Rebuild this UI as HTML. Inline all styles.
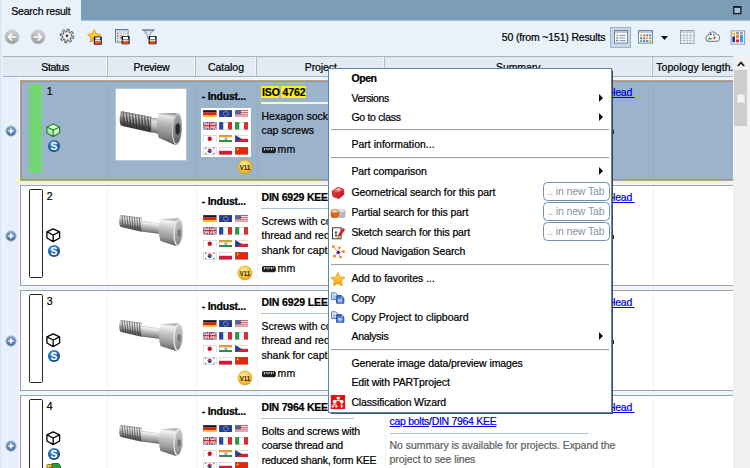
<!DOCTYPE html>
<html lang="en"><head><meta charset="utf-8"><title>Search result</title>
<style>
html,body{margin:0;padding:0;background:#fff}
body{width:750px;height:468px;overflow:hidden}
#app{position:relative;width:750px;height:468px;overflow:hidden;background:#e9f1fa;font-family:'Liberation Sans',sans-serif;font-size:10.5px;line-height:14px;color:#000}
#app div,#app span,#app a,#app svg{position:absolute;box-sizing:border-box}
.t{white-space:pre;line-height:14px;-webkit-text-stroke:0.22px currentColor}
a.t,.lnk{color:#0000e6;text-decoration:underline}
.i{overflow:visible}
.topbar{left:0;top:0;width:750px;height:21px;background:#7b9eb6;border-bottom:1px solid #a6bfd1}
.tab{left:2px;top:0;width:79px;height:22px;background:#e9f1fa}
.edge{left:0;top:0;width:2px;height:468px;background:#e4eef9;border-left:1px solid #d7e5f3}
.toolbar{left:2px;top:21px;width:748px;height:35px;background:#e9f1fa}
.tbdot{left:3px;top:54px;width:730px;height:1px;border-top:1px dotted #f7fbfe}
.vbtn{left:610px;top:27px;width:21px;height:21px;background:#c9d8e6;border:1px solid #9fb3c6}
.thead{left:3px;top:56px;width:730px;height:21px;background:#e2eaf3;border-top:1px solid #a9b3bd;border-bottom:1px solid #a9b3bd}
.th{top:0;height:19px;border-right:1px solid #b3bcc6;box-shadow:inset -1px 0 0 #f1f5fa}
.gutter{left:2px;top:77px;width:17px;height:391px;background:#e8f1fb}
.gridbg{left:19px;top:77px;width:714px;height:391px;background:#ecf4fc;border-left:1px solid #fbfdff}
.row{left:20px;width:714px;height:101px;background:#fff;border:1px solid #a2a2a2;border-left-color:#9a9a9a;border-right:0}
.row.sel{background:#9bb4cc;border:1px dotted #f08a1c;border-right:0;outline:0}
.row.sel:before{content:"";position:absolute;left:0;top:0;width:712px;bottom:0;border:1px solid #7d9cc0}
.cs{top:0;width:1px;height:99px;background:#f2f2f4}
.sel .cs{background:#92acc6}
.bar{left:8px;top:3px;width:14px;height:89px;border:1.1px solid #262626;border-radius:1.6px;background:#fff}
.sel .bar{border:0;border-radius:0;background:#72d672;width:13px;height:89px;box-shadow:0 0 0 0.6px rgba(176,160,228,.75)}
.imgbox{left:95px;top:8px;width:70px;height:71px;background:#fff;outline:1px solid #b4c8db}
.flagbox{width:50px;height:49px;background:#fff}
.fl{width:13.5px;height:7.6px;line-height:0}
.fl svg{position:static!important;display:block}
.hl{background:#ffee22}
.sepl{height:1.6px;background:#eef3f9}
.row:not(.sel) .sepl{height:1.4px;background:#abc2d9}
.vscroll{left:733px;top:56px;width:17px;height:412px;background:#f0f0f0}
.thumb{left:1px;top:14px;width:13px;height:56px;background:#cdcdcd}
.grip{left:4px;top:38px;width:8px;height:9px;background:#f3f3f3;border:1px solid #e2e2e2}
.menu{left:328px;top:68px;width:284px;height:345px;background:#fff;border:1px solid #5d86a8;box-shadow:1.4px 1.4px 0.8px rgba(30,50,70,.85)}
.msep{left:2px;width:278px;height:2px;border-top:1px solid #a2a2a2;background:#f3f3f3}
.nt{left:214px;width:67px;height:19px;border:1.2px solid #7191b0;border-radius:4.5px;background:#fff}
.nt .t{color:#8595a6;-webkit-text-stroke:0}
.arr{width:0;height:0;border-left:4.5px solid #111;border-top:4px solid transparent;border-bottom:4px solid transparent}
</style></head><body>
<div id="app">

<div class="topbar"></div><div class="edge"></div>
<div class="tab"><span class="t" style="left:9.3px;top:4px;letter-spacing:-0.213px;">Search result</span></div>
<svg class="i" style="left:733px;top:6px" width="9" height="9" viewBox="0 0 9 9" ><rect x="0.7" y="0.7" width="7.2" height="6.9" fill="#a9c1d4" stroke="#14212e" stroke-width="1.4"/><rect x="0.7" y="0.4" width="7.2" height="1.4" fill="#14212e"/></svg>
<div class="toolbar"></div><div class="tbdot"></div>
<svg class="i" style="left:4px;top:28.5px" width="16" height="16" viewBox="0 0 16 16" ><defs><linearGradient id="ng" x1="0" y1="0" x2="0" y2="1"><stop offset="0" stop-color="#d4d4d4"/><stop offset="1" stop-color="#999"/></linearGradient></defs><circle cx="8" cy="8" r="7" fill="url(#ng)" stroke="#c4c8cc" stroke-width="0.9"/><path d="M11.6 8H4.6M7.6 4.8L4.4 8L7.6 11.2" fill="none" stroke="#fff" stroke-width="1.7" stroke-linecap="round" stroke-linejoin="round"/></svg>
<svg class="i" style="left:30px;top:28.5px" width="16" height="16" viewBox="0 0 16 16" ><defs><linearGradient id="ng" x1="0" y1="0" x2="0" y2="1"><stop offset="0" stop-color="#d4d4d4"/><stop offset="1" stop-color="#999"/></linearGradient></defs><circle cx="8" cy="8" r="7" fill="url(#ng)" stroke="#c4c8cc" stroke-width="0.9"/><path d="M11.6 8H4.6M7.6 4.8L4.4 8L7.6 11.2" fill="none" stroke="#fff" stroke-width="1.7" stroke-linecap="round" stroke-linejoin="round" transform="translate(16 0) scale(-1 1)"/></svg>
<svg class="i" style="left:59.400000000000006px;top:28.4px" width="16" height="16" viewBox="0 0 16 16" ><polygon points="14.89,8.28 14.46,10.43 11.87,9.87 11.19,10.88 12.68,13.07 10.85,14.29 9.42,12.06 8.21,12.29 7.72,14.89 5.57,14.46 6.13,11.87 5.12,11.19 2.93,12.68 1.71,10.85 3.94,9.42 3.71,8.21 1.11,7.72 1.54,5.57 4.13,6.13 4.81,5.12 3.32,2.93 5.15,1.71 6.58,3.94 7.79,3.71 8.28,1.11 10.43,1.54 9.87,4.13 10.88,4.81 13.07,3.32 14.29,5.15 12.06,6.58 12.29,7.79" fill="#d6d6d6" stroke="#4e4e4e" stroke-width="0.9" stroke-linejoin="round"/><circle cx="8" cy="8" r="3.3" fill="#efefef"/><circle cx="8" cy="7.8" r="1.2" fill="#2c2c2c"/></svg>
<svg class="i" style="left:87.4px;top:29px" width="16" height="16" viewBox="0 0 16 16" ><defs><linearGradient id="sg" x1="0" y1="0" x2="0" y2="1"><stop offset="0" stop-color="#ffe04a"/><stop offset="1" stop-color="#f9b01c"/></linearGradient></defs><polygon points="7.20,0.60 9.20,4.85 13.86,5.44 10.43,8.65 11.31,13.26 7.20,11.00 3.09,13.26 3.97,8.65 0.54,5.44 5.20,4.85" fill="url(#sg)" stroke="#ee9a10" stroke-width="0.9" stroke-linejoin="round"/><g transform="translate(6.8 7.6)"><rect x="0" y="0" width="8" height="8.2" rx="0.8" fill="#0c0c18"/><rect x="1.5" y="0.8" width="5" height="2.2" fill="#fff"/><rect x="1" y="3.4" width="6" height="1.6" fill="#d8dce4"/><rect x="1" y="5" width="6" height="2.6" fill="#f26a10"/><rect x="1" y="6.6" width="6" height="1" fill="#d83a08"/></g></svg>
<svg class="i" style="left:115px;top:29.4px" width="16" height="16" viewBox="0 0 16 16" ><rect x="0.5" y="0.5" width="12.5" height="12.6" fill="#fdfdfe" stroke="#5d7f9d" stroke-width="1"/><rect x="1" y="1" width="11.5" height="1.6" fill="#b9cde0"/><path d="M4 2.6V12.6 M8.6 2.6V12.6" stroke="#9db6cc" stroke-width="0.8"/><g><rect x="1.6" y="3.6" width="1.6" height="1.4" fill="#e0483c"/><rect x="5.2" y="3.6" width="1.8" height="1.4" fill="#f2a33a"/><rect x="9.6" y="3.6" width="1.8" height="1.4" fill="#9bb3c9"/><rect x="1.6" y="6" width="1.6" height="1.4" fill="#3c7fd0"/><rect x="5.2" y="6" width="1.8" height="1.4" fill="#58b04c"/><rect x="1.6" y="8.4" width="1.6" height="1.4" fill="#58b04c"/><rect x="5.2" y="8.4" width="1.8" height="1.4" fill="#e0483c"/><rect x="1.6" y="10.8" width="1.6" height="1.2" fill="#f2a33a"/></g><g transform="translate(6.6 7)"><rect x="0" y="0" width="8" height="8.2" rx="0.8" fill="#0c0c18"/><rect x="1.5" y="0.8" width="5" height="2.2" fill="#fff"/><rect x="1" y="3.4" width="6" height="1.6" fill="#d8dce4"/><rect x="1" y="5" width="6" height="2.6" fill="#f26a10"/><rect x="1" y="6.6" width="6" height="1" fill="#d83a08"/></g></svg>
<svg class="i" style="left:142px;top:29.4px" width="16" height="16" viewBox="0 0 16 16" ><defs><linearGradient id="fg" x1="0" y1="0" x2="1" y2="0"><stop offset="0" stop-color="#8fa3b5"/><stop offset="0.5" stop-color="#dfe8f0"/><stop offset="1" stop-color="#8fa3b5"/></linearGradient></defs><path d="M0.4 0.6 H12.4 L7.6 6 V10.6 L5.2 9 V6 Z" fill="url(#fg)" stroke="#7d93a8" stroke-width="0.8" stroke-linejoin="round"/><path d="M0.6 1.2 H12.2" stroke="#6f879d" stroke-width="1.2"/><g transform="translate(6.6 7)"><rect x="0" y="0" width="8" height="8.2" rx="0.8" fill="#0c0c18"/><rect x="1.5" y="0.8" width="5" height="2.2" fill="#fff"/><rect x="1" y="3.4" width="6" height="1.6" fill="#d8dce4"/><rect x="1" y="5" width="6" height="2.6" fill="#f26a10"/><rect x="1" y="6.6" width="6" height="1" fill="#d83a08"/></g></svg>
<span class="t" style="left:501.8px;top:30px;letter-spacing:-0.163px;">50 (from ~151) Results</span>
<div class="vbtn"></div>
<svg class="i" style="left:613.5px;top:30px" width="14" height="14" viewBox="0 0 14 14" ><rect x="0.5" y="0.5" width="13" height="12.6" fill="#fbfcfd" stroke="#6f879d"/><rect x="1" y="1" width="12" height="2" fill="#b7c9da"/><g><rect x="2.2" y="4.6" width="1.8" height="1.5" fill="#e9a13a"/><rect x="2.2" y="7.2" width="1.8" height="1.5" fill="#58b04c"/><rect x="2.2" y="9.8" width="1.8" height="1.5" fill="#3c7fd0"/><path d="M5.2 5.4H11.6M5.2 8H11.6M5.2 10.6H11.6" stroke="#7a8894" stroke-width="0.9"/></g></svg>
<svg class="i" style="left:638px;top:30px" width="15" height="14" viewBox="0 0 15 14" ><rect x="0.5" y="0.5" width="14" height="12.6" fill="#fbfcfd" stroke="#6f879d"/><rect x="1" y="1" width="13" height="2" fill="#b7c9da"/><g><rect x="2.2" y="4.4" width="2" height="1.9" fill="#e9a13a"/><rect x="5.2" y="4.4" width="2" height="1.9" fill="#58b04c"/><rect x="8.2" y="4.4" width="2" height="1.9" fill="#e0483c"/><rect x="11.2" y="4.4" width="2" height="1.9" fill="#3c7fd0"/><rect x="2.2" y="7.3" width="2" height="1.9" fill="#3c7fd0"/><rect x="5.2" y="7.3" width="2" height="1.9" fill="#e0483c"/><rect x="8.2" y="7.3" width="2" height="1.9" fill="#e9a13a"/><rect x="11.2" y="7.3" width="2" height="1.9" fill="#58b04c"/><rect x="2.2" y="10.1" width="2" height="1.9" fill="#58b04c"/><rect x="5.2" y="10.1" width="2" height="1.9" fill="#3c7fd0"/><rect x="8.2" y="10.1" width="2" height="1.9" fill="#3c7fd0"/><rect x="11.2" y="10.1" width="2" height="1.9" fill="#e9a13a"/></g></svg>
<svg class="i" style="left:661px;top:36px" width="7" height="4" viewBox="0 0 7 4" ><path d="M0 0H7L3.5 4Z" fill="#111"/></svg>
<svg class="i" style="left:679.5px;top:29.5px" width="14.5" height="14.5" viewBox="0 0 15 15" ><rect x="0.5" y="0.5" width="14" height="13.4" fill="#fbfcfd" stroke="#8b9dae"/><rect x="1" y="1" width="13" height="2" fill="#c2d0dd"/><path d="M1 5.6H14M1 8.3H14M1 11H14M4.2 3V13.6M7.5 3V13.6M10.8 3V13.6" stroke="#a9b7c4" stroke-width="0.8"/></svg>
<svg class="i" style="left:705px;top:30px" width="15" height="12" viewBox="0 0 15 12" ><path d="M3.6 11.4 A3.1 3.1 0 0 1 3.1 5.4 A4.6 4.6 0 0 1 11.6 4.3 A3.6 3.6 0 0 1 11.6 11.4 Z" fill="#fefefe" stroke="#7c8b9b" stroke-width="1.1"/><path d="M5.4 5l.9-1.2" stroke="#14208a" stroke-width="1.5"/><rect x="8" y="3.9" width="1.7" height="1.6" fill="#2c9a3c"/><path d="M3.4 8.8h3.2" stroke="#2c9a3c" stroke-width="1.6"/><circle cx="4.8" cy="7.6" r="0.9" fill="#f2b01c"/><path d="M8.6 9l1.6-2.2" stroke="#e6201c" stroke-width="1.6"/></svg>
<svg class="i" style="left:730px;top:29.5px" width="15" height="15" viewBox="0 0 15 15" ><rect x="1.2" y="0.9" width="13.4" height="13.2" fill="#fdfdfe" stroke="#8a9cb0" stroke-width="1"/><rect x="2.4" y="2.6" width="2.6" height="2.6" fill="#f7c21c"/><rect x="2.4" y="6.4" width="2.6" height="5.8" fill="#142a8a"/><rect x="6" y="2.6" width="3" height="0.8" fill="#111"/><rect x="6" y="4.6" width="3" height="3.6" fill="#f58a1c"/><rect x="6" y="9.4" width="3" height="2.9" fill="#e61c1c"/><rect x="10" y="2.6" width="2.8" height="0.8" fill="#111"/><rect x="10" y="4.6" width="2.8" height="7.7" fill="#2a9cf2"/></svg>
<div class="thead">
<div class="th" style="left:0;width:104.5px"></div>
<div class="th" style="left:0;width:193.0px"></div>
<div class="th" style="left:0;width:254.0px"></div>
<div class="th" style="left:0;width:382.0px"></div>
<div class="th" style="left:0;width:650.0px"></div>
<span class="t" style="left:38.3px;top:3px;letter-spacing:-0.347px;">Status</span>
<span class="t" style="left:130.6px;top:3px;letter-spacing:-0.223px;">Preview</span>
<span class="t" style="left:205.0px;top:3px;letter-spacing:-0.029px;">Catalog</span>
<span class="t" style="left:301.8px;top:3px;letter-spacing:-0.098px;">Project</span>
<span class="t" style="left:493.0px;top:3px;letter-spacing:-0.077px;">Summary</span>
<span class="t" style="left:653.3px;top:3px;letter-spacing:0.045px;">Topology length.</span>
</div>
<div class="gutter"></div><div class="gridbg"></div>
<div class="row sel" style="top:80px;height:101px">
<div class="cs" style="left:86.0px;height:99px"></div>
<div class="cs" style="left:174.5px;height:99px"></div>
<div class="cs" style="left:235.5px;height:99px"></div>
<div class="cs" style="left:363.5px;height:99px"></div>
<div class="cs" style="left:631.5px;height:99px"></div>
<div class="bar"></div>
<span class="t" style="left:25.8px;top:3px;">1</span>
<svg class="i" style="left:25.200000000000003px;top:42px" width="15" height="15" viewBox="0 0 15 15" ><path d="M7.2 0.9 L13.6 3.9 L13.6 10 L7.2 13.6 L0.9 10 L0.9 3.9 Z" fill="#e4f7de"/><path d="M0.9 3.9 L7.2 7 L7.2 13.6 L0.9 10 Z" fill="#b9e6b0"/><path d="M13.6 3.9 L7.2 7 L7.2 13.6 L13.6 10 Z" fill="#d0f0c8"/><path d="M7.2 0.9 L13.6 3.9 L13.6 10 L7.2 13.6 L0.9 10 L0.9 3.9 Z M0.9 3.9 L7.2 7 L13.6 3.9 M7.2 7 V13.6" fill="none" stroke="#128a1c" stroke-width="1.15" stroke-linejoin="round"/></svg>
<svg class="i" style="left:25.6px;top:57.69999999999999px" width="14" height="14" viewBox="0 0 14 14" ><defs><radialGradient id="sb" cx="0.4" cy="0.3" r="0.8"><stop offset="0" stop-color="#4d9ad6"/><stop offset="0.6" stop-color="#1d62a6"/><stop offset="1" stop-color="#0d3c74"/></radialGradient></defs><circle cx="7" cy="7" r="6.1" fill="url(#sb)"/><text x="7" y="10.7" text-anchor="middle" font-family="Liberation Sans, sans-serif" font-weight="700" font-size="10.4" fill="#fff">S</text></svg>
<div class="imgbox"></div>
<svg class="i" style="filter:blur(0.35px);left:95px;top:7.5px" width="70" height="71" viewBox="116 88.5 70 71" ><defs>
<linearGradient id="th1" gradientUnits="userSpaceOnUse" x1="134" y1="113" x2="131.5" y2="129"><stop offset="0" stop-color="#6c6c6c"/><stop offset="0.14" stop-color="#b8b8b8"/><stop offset="0.36" stop-color="#7a7a7a"/><stop offset="0.75" stop-color="#444"/><stop offset="1" stop-color="#343434"/></linearGradient>
<linearGradient id="nk1" gradientUnits="userSpaceOnUse" x1="155" y1="117" x2="153" y2="132"><stop offset="0" stop-color="#9a9a9a"/><stop offset="0.25" stop-color="#e2e2e2"/><stop offset="0.7" stop-color="#a8a8a8"/><stop offset="1" stop-color="#6a6a6a"/></linearGradient>
<linearGradient id="hd1" gradientUnits="userSpaceOnUse" x1="167" y1="112" x2="163" y2="142"><stop offset="0" stop-color="#8a8a8a"/><stop offset="0.12" stop-color="#e8e8e8"/><stop offset="0.3" stop-color="#c4c4c4"/><stop offset="0.6" stop-color="#9a9a9a"/><stop offset="0.85" stop-color="#7a7a7a"/><stop offset="1" stop-color="#555"/></linearGradient>
<linearGradient id="fc1" gradientUnits="userSpaceOnUse" x1="172" y1="114" x2="180" y2="144"><stop offset="0" stop-color="#a6a6a6"/><stop offset="0.5" stop-color="#868686"/><stop offset="1" stop-color="#5e5e5e"/></linearGradient>
</defs>
<path d="M121.6 110.7 L151.6 116.5 L151.6 132 L121.6 125.3 Q119.6 124.6 119.7 118 Q119.8 111 121.6 110.7Z" fill="url(#th1)"/>
<path d="M123.20 111.00 L124.80 126.29 M126.25 111.58 L127.85 126.94 M129.30 112.15 L130.90 127.60 M132.35 112.72 L133.95 128.26 M135.40 113.30 L137.00 128.91 M138.45 113.87 L140.05 129.57 M141.50 114.44 L143.10 130.22 M144.55 115.02 L146.15 130.88 M147.60 115.59 L149.20 131.53 M150.65 116.16 L152.25 132.19 " stroke="#2a2a2a" stroke-width="1.3" opacity="0.55" fill="none"/><path d="M124.70 111.48 L125.70 120.94 M127.75 112.06 L128.75 121.55 M130.80 112.63 L131.80 122.16 M133.85 113.20 L134.85 122.77 M136.90 113.78 L137.90 123.38 M139.95 114.35 L140.95 123.99 M143.00 114.92 L144.00 124.60 M146.05 115.50 L147.05 125.21 M149.10 116.07 L150.10 125.82 M152.15 116.64 L153.15 126.43 " stroke="#f0f0f0" stroke-width="1" opacity="0.4" fill="none"/>
<path d="M121.8 111.4 L151.4 117.2" stroke="#9a9a9a" stroke-width="0.8" opacity="0.7"/>
<path d="M151.2 117.2 L158 118 L158 133.2 L151.2 131.6Z" fill="url(#nk1)"/>
<path d="M158.2 114.6 Q158.6 112.9 160.2 112.8 L176.6 112.5 L180 120 L181 135 L175.6 144.8 L158.6 137.2 Q155.2 126 158.2 114.6Z" fill="url(#hd1)"/>
<ellipse cx="177" cy="128.6" rx="5.1" ry="16.1" transform="rotate(3 177 128.6)" fill="#c8c8c8"/><ellipse cx="177.4" cy="128.7" rx="4.2" ry="14.4" transform="rotate(3 177.4 128.7)" fill="url(#fc1)"/>
<path d="M177.8 122.3 L179.9 124.6 L180 131.6 L177.8 134.8 L175.6 132.4 L175.5 125.2Z" fill="#262626" stroke="#555" stroke-width="0.5"/></svg>
<span class="t" style="left:180.7px;top:8px;letter-spacing:-0.216px;font-weight:700;">- Indust...</span>
<div class="flagbox" style="left:179.5px;top:26.6px"></div><span class="fl" style="left:182px;top:28.8px"><svg width="13.5" height="7.6" viewBox="0 0 13.5 7.6" preserveAspectRatio="none"><rect x="0" y="0" width="13.5" height="2.6" fill="#1a1a1a"/><rect x="0" y="2.5" width="13.5" height="2.6" fill="#e31b1b"/><rect x="0" y="5" width="13.5" height="2.6" fill="#f7c81e"/><rect x="0.25" y="0.25" width="13.0" height="7.1" fill="none" stroke="#8a8a8a" stroke-opacity="0.55" stroke-width="0.5"/></svg></span><span class="fl" style="left:197.8px;top:28.8px"><svg width="13.5" height="7.6" viewBox="0 0 13.5 7.6" preserveAspectRatio="none"><rect x="0" y="0" width="13.5" height="7.6" fill="#1f3a9e"/><circle cx="6.75" cy="3.8" r="2.3" fill="none" stroke="#f2d64a" stroke-width="0.9" stroke-dasharray="0.9 0.55"/><rect x="0.25" y="0.25" width="13.0" height="7.1" fill="none" stroke="#8a8a8a" stroke-opacity="0.55" stroke-width="0.5"/></svg></span><span class="fl" style="left:213.5px;top:28.8px"><svg width="13.5" height="7.6" viewBox="0 0 13.5 7.6" preserveAspectRatio="none"><rect x="0" y="0" width="13.5" height="7.6" fill="#f4f0f0"/><rect x="0" y="0.0" width="13.5" height="1.0857142857142856" fill="#d4505c"/><rect x="0" y="2.1714285714285713" width="13.5" height="1.0857142857142856" fill="#d4505c"/><rect x="0" y="4.3428571428571425" width="13.5" height="1.0857142857142856" fill="#d4505c"/><rect x="0" y="6.514285714285713" width="13.5" height="1.0857142857142856" fill="#d4505c"/><rect x="0" y="0" width="6" height="4.2" fill="#5a5f9a"/><rect x="0.25" y="0.25" width="13.0" height="7.1" fill="none" stroke="#8a8a8a" stroke-opacity="0.55" stroke-width="0.5"/></svg></span><span class="fl" style="left:182px;top:41.2px"><svg width="13.5" height="7.6" viewBox="0 0 13.5 7.6" preserveAspectRatio="none"><rect x="0" y="0" width="13.5" height="7.6" fill="#2a3a94"/><path d="M0 0L13.5 7.6M13.5 0L0 7.6" stroke="#fff" stroke-width="1.8"/><path d="M0 0L13.5 7.6M13.5 0L0 7.6" stroke="#d62a36" stroke-width="0.7"/><path d="M6.75 0V7.6M0 3.8H13.5" stroke="#fff" stroke-width="2.8"/><path d="M6.75 0V7.6M0 3.8H13.5" stroke="#d62a36" stroke-width="1.5"/><rect x="0.25" y="0.25" width="13.0" height="7.1" fill="none" stroke="#8a8a8a" stroke-opacity="0.55" stroke-width="0.5"/></svg></span><span class="fl" style="left:197.8px;top:41.2px"><svg width="13.5" height="7.6" viewBox="0 0 13.5 7.6" preserveAspectRatio="none"><rect x="0" y="0" width="4.5" height="7.6" fill="#2545a8"/><rect x="4.5" y="0" width="4.5" height="7.6" fill="#fff"/><rect x="9" y="0" width="4.5" height="7.6" fill="#e2252b"/><rect x="0.25" y="0.25" width="13.0" height="7.1" fill="none" stroke="#8a8a8a" stroke-opacity="0.55" stroke-width="0.5"/></svg></span><span class="fl" style="left:213.5px;top:41.2px"><svg width="13.5" height="7.6" viewBox="0 0 13.5 7.6" preserveAspectRatio="none"><rect x="0" y="0" width="4.5" height="7.6" fill="#2f9a46"/><rect x="4.5" y="0" width="4.5" height="7.6" fill="#fff"/><rect x="9" y="0" width="4.5" height="7.6" fill="#dd2b32"/><rect x="0.25" y="0.25" width="13.0" height="7.1" fill="none" stroke="#8a8a8a" stroke-opacity="0.55" stroke-width="0.5"/></svg></span><span class="fl" style="left:182px;top:53.6px"><svg width="13.5" height="7.6" viewBox="0 0 13.5 7.6" preserveAspectRatio="none"><rect x="0" y="0" width="13.5" height="7.6" fill="#fff"/><circle cx="6.75" cy="3.8" r="2.2" fill="#c81428"/><rect x="0.25" y="0.25" width="13.0" height="7.1" fill="none" stroke="#8a8a8a" stroke-opacity="0.55" stroke-width="0.5"/></svg></span><span class="fl" style="left:197.8px;top:53.6px"><svg width="13.5" height="7.6" viewBox="0 0 13.5 7.6" preserveAspectRatio="none"><rect x="0" y="0" width="13.5" height="2.6" fill="#f39a32"/><rect x="0" y="2.5" width="13.5" height="2.6" fill="#fff"/><rect x="0" y="5" width="13.5" height="2.6" fill="#2f8f3a"/><circle cx="6.75" cy="3.8" r="1" fill="none" stroke="#2a3a94" stroke-width="0.6"/><rect x="0.25" y="0.25" width="13.0" height="7.1" fill="none" stroke="#8a8a8a" stroke-opacity="0.55" stroke-width="0.5"/></svg></span><span class="fl" style="left:213.5px;top:53.6px"><svg width="13.5" height="7.6" viewBox="0 0 13.5 7.6" preserveAspectRatio="none"><rect x="0" y="0" width="13.5" height="3.8" fill="#fff"/><rect x="0" y="3.8" width="13.5" height="3.8" fill="#d7222d"/><path d="M0 0L6.6 3.8L0 7.6Z" fill="#24408e"/><rect x="0.25" y="0.25" width="13.0" height="7.1" fill="none" stroke="#8a8a8a" stroke-opacity="0.55" stroke-width="0.5"/></svg></span><span class="fl" style="left:182px;top:66px"><svg width="13.5" height="7.6" viewBox="0 0 13.5 7.6" preserveAspectRatio="none"><rect x="0" y="0" width="13.5" height="7.6" fill="#fff"/><path d="M4.6 3.8A2.15 2.15 0 0 1 8.9 3.8Z" fill="#cd2e3a" transform="rotate(25 6.75 3.8)"/><path d="M4.6 3.8A2.15 2.15 0 0 0 8.9 3.8Z" fill="#0047a0" transform="rotate(25 6.75 3.8)"/><path d="M2 1.6L3.4 0.8M2 6L3.4 6.8M10.1 0.8L11.5 1.6M10.1 6.8L11.5 6" stroke="#222" stroke-width="0.8"/><rect x="0.25" y="0.25" width="13.0" height="7.1" fill="none" stroke="#8a8a8a" stroke-opacity="0.55" stroke-width="0.5"/></svg></span><span class="fl" style="left:197.8px;top:66px"><svg width="13.5" height="7.6" viewBox="0 0 13.5 7.6" preserveAspectRatio="none"><rect x="0" y="0" width="13.5" height="3.8" fill="#fff"/><rect x="0" y="3.8" width="13.5" height="3.8" fill="#dc143c"/><rect x="0.25" y="0.25" width="13.0" height="7.1" fill="none" stroke="#8a8a8a" stroke-opacity="0.55" stroke-width="0.5"/></svg></span><span class="fl" style="left:213.5px;top:66px"><svg width="13.5" height="7.6" viewBox="0 0 13.5 7.6" preserveAspectRatio="none"><rect x="0" y="0" width="13.5" height="7.6" fill="#de2910"/><polygon points="2.60,0.90 2.98,1.87 4.03,1.94 3.22,2.60 3.48,3.61 2.60,3.05 1.72,3.61 1.98,2.60 1.17,1.94 2.22,1.87" fill="#ffde00"/><rect x="0.25" y="0.25" width="13.0" height="7.1" fill="none" stroke="#8a8a8a" stroke-opacity="0.55" stroke-width="0.5"/></svg></span>
<svg class="i" style="left:216.2px;top:78.4px" width="16" height="16" viewBox="0 0 16 16" ><defs><radialGradient id="vg" cx="0.45" cy="0.35" r="0.75"><stop offset="0" stop-color="#fff3b0"/><stop offset="0.55" stop-color="#f6c638"/><stop offset="1" stop-color="#d98e0c"/></radialGradient></defs><circle cx="8" cy="8" r="7" fill="url(#vg)" stroke="#e0a21c" stroke-width="0.7"/><text x="8" y="10.6" text-anchor="middle" font-family="Liberation Sans, sans-serif" font-weight="700" font-size="7" fill="#2a1a00" textLength="10.5" lengthAdjust="spacingAndGlyphs">V11</text></svg>
<div class="hl" style="left:240px;top:4.6px;width:18.3px;height:12.9px"></div><div class="hl" style="left:260.2px;top:4.6px;width:25.2px;height:12.9px"></div>
<span class="t" style="left:241.0px;top:4px;letter-spacing:-0.097px;font-weight:700;">ISO 4762</span>
<div class="sepl" style="left:240px;top:21.2px;width:95px"></div>
<span class="t" style="left:240.5px;top:28px;">Hexagon socket head</span>
<span class="t" style="left:240.5px;top:42px;">cap screws</span>
<svg class="i" style="left:241.0px;top:66.19999999999999px" width="14" height="6.2" viewBox="0 0 14 6.2" ><rect x="0.5" y="0.5" width="12.8" height="5.2" rx="0.9" fill="#1c1c1c" stroke="#111" stroke-width="0.9"/><path d="M2.4 1V3.4M4.2 1V2.6M6 1V3.4M7.8 1V2.6M9.6 1V3.4M11.4 1V2.6" stroke="#f4f4f4" stroke-width="0.9"/></svg>
<span class="t" style="left:256.5px;top:61px;letter-spacing:0.300px;">mm</span>
<a class="t lnk" style="right:99.4px;top:4px;letter-spacing:-0.28px">Bolts/Screws/Cap screws/Socket Head </a>
<span class="t" style="left:368.6px;top:17px;letter-spacing:-0.28px;"><span class="lnk" style="position:static">cap screws</span>/<span class="lnk" style="position:static">ISO 4762</span></span>
<div class="sepl" style="left:368.6px;top:36.5px;width:198px"></div><div style="left:591.6px;top:48.5px;width:1.8px;height:4.5px;background:#2a2a2a"></div>
</div>
<div class="row" style="top:185px;height:101px">
<div class="cs" style="left:86.0px;height:99px"></div>
<div class="cs" style="left:174.5px;height:99px"></div>
<div class="cs" style="left:235.5px;height:99px"></div>
<div class="cs" style="left:363.5px;height:99px"></div>
<div class="cs" style="left:631.5px;height:99px"></div>
<div class="bar"></div>
<span class="t" style="left:25.8px;top:3px;">2</span>
<svg class="i" style="left:25.200000000000003px;top:42px" width="15" height="15" viewBox="0 0 15 15" ><path d="M7.2 0.9 L13.6 3.9 L13.6 10 L7.2 13.6 L0.9 10 L0.9 3.9 Z" fill="#fff"/><path d="M0.9 3.9 L7.2 7 L7.2 13.6 L0.9 10 Z" fill="#fff"/><path d="M13.6 3.9 L7.2 7 L7.2 13.6 L13.6 10 Z" fill="#fff"/><path d="M7.2 0.9 L13.6 3.9 L13.6 10 L7.2 13.6 L0.9 10 L0.9 3.9 Z M0.9 3.9 L7.2 7 L13.6 3.9 M7.2 7 V13.6" fill="none" stroke="#000" stroke-width="1.3" stroke-linejoin="round"/></svg>
<svg class="i" style="left:25.6px;top:57.69999999999999px" width="14" height="14" viewBox="0 0 14 14" ><defs><radialGradient id="sb" cx="0.4" cy="0.3" r="0.8"><stop offset="0" stop-color="#4d9ad6"/><stop offset="0.6" stop-color="#1d62a6"/><stop offset="1" stop-color="#0d3c74"/></radialGradient></defs><circle cx="7" cy="7" r="6.1" fill="url(#sb)"/><text x="7" y="10.7" text-anchor="middle" font-family="Liberation Sans, sans-serif" font-weight="700" font-size="10.4" fill="#fff">S</text></svg>
<svg class="i" style="filter:blur(0.35px);left:93.5px;top:16px" width="72" height="60" viewBox="114.5 202 72 60" ><defs>
<linearGradient id="th2" gradientUnits="userSpaceOnUse" x1="131" y1="216" x2="129" y2="230"><stop offset="0" stop-color="#8a8a8a"/><stop offset="0.18" stop-color="#dcdcdc"/><stop offset="0.45" stop-color="#a0a0a0"/><stop offset="0.8" stop-color="#626262"/><stop offset="1" stop-color="#4c4c4c"/></linearGradient>
<linearGradient id="sh2" gradientUnits="userSpaceOnUse" x1="152" y1="221" x2="150.5" y2="233"><stop offset="0" stop-color="#8c8c8c"/><stop offset="0.2" stop-color="#f2f2f2"/><stop offset="0.55" stop-color="#b8b8b8"/><stop offset="0.85" stop-color="#8a8a8a"/><stop offset="1" stop-color="#5c5c5c"/></linearGradient>
<linearGradient id="hd2" gradientUnits="userSpaceOnUse" x1="169" y1="218" x2="165.5" y2="244"><stop offset="0" stop-color="#9a9a9a"/><stop offset="0.13" stop-color="#f4f4f4"/><stop offset="0.4" stop-color="#c6c6c6"/><stop offset="0.75" stop-color="#989898"/><stop offset="1" stop-color="#626262"/></linearGradient>
<linearGradient id="fc2" gradientUnits="userSpaceOnUse" x1="174" y1="220" x2="181" y2="246"><stop offset="0" stop-color="#cccccc"/><stop offset="0.55" stop-color="#a8a8a8"/><stop offset="1" stop-color="#7a7a7a"/></linearGradient>
</defs>
<path d="M120.6 215 L141.3 217.7 L141.3 231.8 L120.6 227 Q118.6 226.4 118.7 221 Q118.8 215.4 120.6 215Z" fill="url(#th2)"/>
<path d="M121.60 215.51 L122.90 227.73 M124.05 215.81 L125.35 228.24 M126.50 216.10 L127.80 228.74 M128.95 216.39 L130.25 229.24 M131.40 216.69 L132.70 229.74 M133.85 216.98 L135.15 230.24 M136.30 217.28 L137.60 230.75 M138.75 217.57 L140.05 231.25 " stroke="#3a3a3a" stroke-width="1" opacity="0.55" fill="none"/><path d="M122.80 215.86 L123.60 223.61 M125.25 216.15 L126.05 224.00 M127.70 216.44 L128.50 224.39 M130.15 216.74 L130.95 224.78 M132.60 217.03 L133.40 225.18 M135.05 217.33 L135.85 225.57 M137.50 217.62 L138.30 225.96 M139.95 217.91 L140.75 226.35 " stroke="#fff" stroke-width="0.9" opacity="0.45" fill="none"/>
<path d="M140.8 220.8 L160 223.6 L160 234 L140.8 231.4Z" fill="url(#sh2)"/>
<path d="M159.6 220.4 Q160 219.1 161.4 219 L178 218.3 L181.4 225 L182 237 L176.2 246.2 L160 240.9 Q156.8 231 159.6 220.4Z" fill="url(#hd2)"/>
<ellipse cx="177.7" cy="232.2" rx="4.7" ry="13.9" transform="rotate(4 177.7 232.2)" fill="#e6e6e6"/><ellipse cx="178.1" cy="232.3" rx="3.8" ry="12.4" transform="rotate(4 178.1 232.3)" fill="url(#fc2)"/>
<path d="M178.6 228.8 L180.2 230.5 L180.2 235 L178.6 237.2 L177 235.5 L176.9 230.7Z" fill="#747474" stroke="#9a9a9a" stroke-width="0.4"/></svg>
<span class="t" style="left:180.7px;top:8px;letter-spacing:-0.216px;font-weight:700;">- Indust...</span>
<span class="fl" style="left:182px;top:28.8px"><svg width="13.5" height="7.6" viewBox="0 0 13.5 7.6" preserveAspectRatio="none"><rect x="0" y="0" width="13.5" height="2.6" fill="#1a1a1a"/><rect x="0" y="2.5" width="13.5" height="2.6" fill="#e31b1b"/><rect x="0" y="5" width="13.5" height="2.6" fill="#f7c81e"/><rect x="0.25" y="0.25" width="13.0" height="7.1" fill="none" stroke="#8a8a8a" stroke-opacity="0.55" stroke-width="0.5"/></svg></span><span class="fl" style="left:197.8px;top:28.8px"><svg width="13.5" height="7.6" viewBox="0 0 13.5 7.6" preserveAspectRatio="none"><rect x="0" y="0" width="13.5" height="7.6" fill="#1f3a9e"/><circle cx="6.75" cy="3.8" r="2.3" fill="none" stroke="#f2d64a" stroke-width="0.9" stroke-dasharray="0.9 0.55"/><rect x="0.25" y="0.25" width="13.0" height="7.1" fill="none" stroke="#8a8a8a" stroke-opacity="0.55" stroke-width="0.5"/></svg></span><span class="fl" style="left:213.5px;top:28.8px"><svg width="13.5" height="7.6" viewBox="0 0 13.5 7.6" preserveAspectRatio="none"><rect x="0" y="0" width="13.5" height="7.6" fill="#f4f0f0"/><rect x="0" y="0.0" width="13.5" height="1.0857142857142856" fill="#d4505c"/><rect x="0" y="2.1714285714285713" width="13.5" height="1.0857142857142856" fill="#d4505c"/><rect x="0" y="4.3428571428571425" width="13.5" height="1.0857142857142856" fill="#d4505c"/><rect x="0" y="6.514285714285713" width="13.5" height="1.0857142857142856" fill="#d4505c"/><rect x="0" y="0" width="6" height="4.2" fill="#5a5f9a"/><rect x="0.25" y="0.25" width="13.0" height="7.1" fill="none" stroke="#8a8a8a" stroke-opacity="0.55" stroke-width="0.5"/></svg></span><span class="fl" style="left:182px;top:41.2px"><svg width="13.5" height="7.6" viewBox="0 0 13.5 7.6" preserveAspectRatio="none"><rect x="0" y="0" width="13.5" height="7.6" fill="#2a3a94"/><path d="M0 0L13.5 7.6M13.5 0L0 7.6" stroke="#fff" stroke-width="1.8"/><path d="M0 0L13.5 7.6M13.5 0L0 7.6" stroke="#d62a36" stroke-width="0.7"/><path d="M6.75 0V7.6M0 3.8H13.5" stroke="#fff" stroke-width="2.8"/><path d="M6.75 0V7.6M0 3.8H13.5" stroke="#d62a36" stroke-width="1.5"/><rect x="0.25" y="0.25" width="13.0" height="7.1" fill="none" stroke="#8a8a8a" stroke-opacity="0.55" stroke-width="0.5"/></svg></span><span class="fl" style="left:197.8px;top:41.2px"><svg width="13.5" height="7.6" viewBox="0 0 13.5 7.6" preserveAspectRatio="none"><rect x="0" y="0" width="4.5" height="7.6" fill="#2545a8"/><rect x="4.5" y="0" width="4.5" height="7.6" fill="#fff"/><rect x="9" y="0" width="4.5" height="7.6" fill="#e2252b"/><rect x="0.25" y="0.25" width="13.0" height="7.1" fill="none" stroke="#8a8a8a" stroke-opacity="0.55" stroke-width="0.5"/></svg></span><span class="fl" style="left:213.5px;top:41.2px"><svg width="13.5" height="7.6" viewBox="0 0 13.5 7.6" preserveAspectRatio="none"><rect x="0" y="0" width="4.5" height="7.6" fill="#2f9a46"/><rect x="4.5" y="0" width="4.5" height="7.6" fill="#fff"/><rect x="9" y="0" width="4.5" height="7.6" fill="#dd2b32"/><rect x="0.25" y="0.25" width="13.0" height="7.1" fill="none" stroke="#8a8a8a" stroke-opacity="0.55" stroke-width="0.5"/></svg></span><span class="fl" style="left:182px;top:53.6px"><svg width="13.5" height="7.6" viewBox="0 0 13.5 7.6" preserveAspectRatio="none"><rect x="0" y="0" width="13.5" height="7.6" fill="#fff"/><circle cx="6.75" cy="3.8" r="2.2" fill="#c81428"/><rect x="0.25" y="0.25" width="13.0" height="7.1" fill="none" stroke="#8a8a8a" stroke-opacity="0.55" stroke-width="0.5"/></svg></span><span class="fl" style="left:197.8px;top:53.6px"><svg width="13.5" height="7.6" viewBox="0 0 13.5 7.6" preserveAspectRatio="none"><rect x="0" y="0" width="13.5" height="2.6" fill="#f39a32"/><rect x="0" y="2.5" width="13.5" height="2.6" fill="#fff"/><rect x="0" y="5" width="13.5" height="2.6" fill="#2f8f3a"/><circle cx="6.75" cy="3.8" r="1" fill="none" stroke="#2a3a94" stroke-width="0.6"/><rect x="0.25" y="0.25" width="13.0" height="7.1" fill="none" stroke="#8a8a8a" stroke-opacity="0.55" stroke-width="0.5"/></svg></span><span class="fl" style="left:213.5px;top:53.6px"><svg width="13.5" height="7.6" viewBox="0 0 13.5 7.6" preserveAspectRatio="none"><rect x="0" y="0" width="13.5" height="3.8" fill="#fff"/><rect x="0" y="3.8" width="13.5" height="3.8" fill="#d7222d"/><path d="M0 0L6.6 3.8L0 7.6Z" fill="#24408e"/><rect x="0.25" y="0.25" width="13.0" height="7.1" fill="none" stroke="#8a8a8a" stroke-opacity="0.55" stroke-width="0.5"/></svg></span><span class="fl" style="left:182px;top:66px"><svg width="13.5" height="7.6" viewBox="0 0 13.5 7.6" preserveAspectRatio="none"><rect x="0" y="0" width="13.5" height="7.6" fill="#fff"/><path d="M4.6 3.8A2.15 2.15 0 0 1 8.9 3.8Z" fill="#cd2e3a" transform="rotate(25 6.75 3.8)"/><path d="M4.6 3.8A2.15 2.15 0 0 0 8.9 3.8Z" fill="#0047a0" transform="rotate(25 6.75 3.8)"/><path d="M2 1.6L3.4 0.8M2 6L3.4 6.8M10.1 0.8L11.5 1.6M10.1 6.8L11.5 6" stroke="#222" stroke-width="0.8"/><rect x="0.25" y="0.25" width="13.0" height="7.1" fill="none" stroke="#8a8a8a" stroke-opacity="0.55" stroke-width="0.5"/></svg></span><span class="fl" style="left:197.8px;top:66px"><svg width="13.5" height="7.6" viewBox="0 0 13.5 7.6" preserveAspectRatio="none"><rect x="0" y="0" width="13.5" height="3.8" fill="#fff"/><rect x="0" y="3.8" width="13.5" height="3.8" fill="#dc143c"/><rect x="0.25" y="0.25" width="13.0" height="7.1" fill="none" stroke="#8a8a8a" stroke-opacity="0.55" stroke-width="0.5"/></svg></span><span class="fl" style="left:213.5px;top:66px"><svg width="13.5" height="7.6" viewBox="0 0 13.5 7.6" preserveAspectRatio="none"><rect x="0" y="0" width="13.5" height="7.6" fill="#de2910"/><polygon points="2.60,0.90 2.98,1.87 4.03,1.94 3.22,2.60 3.48,3.61 2.60,3.05 1.72,3.61 1.98,2.60 1.17,1.94 2.22,1.87" fill="#ffde00"/><rect x="0.25" y="0.25" width="13.0" height="7.1" fill="none" stroke="#8a8a8a" stroke-opacity="0.55" stroke-width="0.5"/></svg></span>
<svg class="i" style="left:216.2px;top:79px" width="16" height="16" viewBox="0 0 16 16" ><defs><radialGradient id="vg" cx="0.45" cy="0.35" r="0.75"><stop offset="0" stop-color="#fff3b0"/><stop offset="0.55" stop-color="#f6c638"/><stop offset="1" stop-color="#d98e0c"/></radialGradient></defs><circle cx="8" cy="8" r="7" fill="url(#vg)" stroke="#e0a21c" stroke-width="0.7"/><text x="8" y="10.6" text-anchor="middle" font-family="Liberation Sans, sans-serif" font-weight="700" font-size="7" fill="#2a1a00" textLength="10.5" lengthAdjust="spacingAndGlyphs">V11</text></svg>
<span class="t" style="left:240.5px;top:4px;letter-spacing:-0.206px;font-weight:700;">DIN 6929 KEE</span>
<div class="sepl" style="left:240px;top:22.0px;width:93px"></div>
<span class="t" style="left:240.5px;top:28px;">Screws with coarse</span>
<span class="t" style="left:240.5px;top:42px;">thread and reduced</span>
<span class="t" style="left:240.5px;top:57px;">shank for captive</span>
<svg class="i" style="left:241.0px;top:80.30000000000001px" width="14" height="6.2" viewBox="0 0 14 6.2" ><rect x="0.5" y="0.5" width="12.8" height="5.2" rx="0.9" fill="#1c1c1c" stroke="#111" stroke-width="0.9"/><path d="M2.4 1V3.4M4.2 1V2.6M6 1V3.4M7.8 1V2.6M9.6 1V3.4M11.4 1V2.6" stroke="#f4f4f4" stroke-width="0.9"/></svg>
<span class="t" style="left:256.5px;top:75px;letter-spacing:0.300px;">mm</span>
<a class="t lnk" style="right:99.4px;top:4px;letter-spacing:-0.28px">Bolts/Screws/Cap screws/Socket Head </a>
<span class="t" style="left:368.6px;top:17px;letter-spacing:-0.28px;"><span class="lnk" style="position:static">cap bolts</span>/<span class="lnk" style="position:static">DIN 6929 KEE</span></span>
<div class="sepl" style="left:368.6px;top:36.5px;width:198px"></div><div style="left:591.6px;top:48.5px;width:1.8px;height:4.5px;background:#2a2a2a"></div>
</div>
<div class="row" style="top:290px;height:101px">
<div class="cs" style="left:86.0px;height:99px"></div>
<div class="cs" style="left:174.5px;height:99px"></div>
<div class="cs" style="left:235.5px;height:99px"></div>
<div class="cs" style="left:363.5px;height:99px"></div>
<div class="cs" style="left:631.5px;height:99px"></div>
<div class="bar"></div>
<span class="t" style="left:25.8px;top:3px;">3</span>
<svg class="i" style="left:25.200000000000003px;top:42px" width="15" height="15" viewBox="0 0 15 15" ><path d="M7.2 0.9 L13.6 3.9 L13.6 10 L7.2 13.6 L0.9 10 L0.9 3.9 Z" fill="#fff"/><path d="M0.9 3.9 L7.2 7 L7.2 13.6 L0.9 10 Z" fill="#fff"/><path d="M13.6 3.9 L7.2 7 L7.2 13.6 L13.6 10 Z" fill="#fff"/><path d="M7.2 0.9 L13.6 3.9 L13.6 10 L7.2 13.6 L0.9 10 L0.9 3.9 Z M0.9 3.9 L7.2 7 L13.6 3.9 M7.2 7 V13.6" fill="none" stroke="#000" stroke-width="1.3" stroke-linejoin="round"/></svg>
<svg class="i" style="left:25.6px;top:57.69999999999999px" width="14" height="14" viewBox="0 0 14 14" ><defs><radialGradient id="sb" cx="0.4" cy="0.3" r="0.8"><stop offset="0" stop-color="#4d9ad6"/><stop offset="0.6" stop-color="#1d62a6"/><stop offset="1" stop-color="#0d3c74"/></radialGradient></defs><circle cx="7" cy="7" r="6.1" fill="url(#sb)"/><text x="7" y="10.7" text-anchor="middle" font-family="Liberation Sans, sans-serif" font-weight="700" font-size="10.4" fill="#fff">S</text></svg>
<svg class="i" style="filter:blur(0.35px);left:93.5px;top:16px" width="72" height="60" viewBox="114.5 202 72 60" ><defs>
<linearGradient id="th2" gradientUnits="userSpaceOnUse" x1="131" y1="216" x2="129" y2="230"><stop offset="0" stop-color="#8a8a8a"/><stop offset="0.18" stop-color="#dcdcdc"/><stop offset="0.45" stop-color="#a0a0a0"/><stop offset="0.8" stop-color="#626262"/><stop offset="1" stop-color="#4c4c4c"/></linearGradient>
<linearGradient id="sh2" gradientUnits="userSpaceOnUse" x1="152" y1="221" x2="150.5" y2="233"><stop offset="0" stop-color="#8c8c8c"/><stop offset="0.2" stop-color="#f2f2f2"/><stop offset="0.55" stop-color="#b8b8b8"/><stop offset="0.85" stop-color="#8a8a8a"/><stop offset="1" stop-color="#5c5c5c"/></linearGradient>
<linearGradient id="hd2" gradientUnits="userSpaceOnUse" x1="169" y1="218" x2="165.5" y2="244"><stop offset="0" stop-color="#9a9a9a"/><stop offset="0.13" stop-color="#f4f4f4"/><stop offset="0.4" stop-color="#c6c6c6"/><stop offset="0.75" stop-color="#989898"/><stop offset="1" stop-color="#626262"/></linearGradient>
<linearGradient id="fc2" gradientUnits="userSpaceOnUse" x1="174" y1="220" x2="181" y2="246"><stop offset="0" stop-color="#cccccc"/><stop offset="0.55" stop-color="#a8a8a8"/><stop offset="1" stop-color="#7a7a7a"/></linearGradient>
</defs>
<path d="M120.6 215 L141.3 217.7 L141.3 231.8 L120.6 227 Q118.6 226.4 118.7 221 Q118.8 215.4 120.6 215Z" fill="url(#th2)"/>
<path d="M121.60 215.51 L122.90 227.73 M124.05 215.81 L125.35 228.24 M126.50 216.10 L127.80 228.74 M128.95 216.39 L130.25 229.24 M131.40 216.69 L132.70 229.74 M133.85 216.98 L135.15 230.24 M136.30 217.28 L137.60 230.75 M138.75 217.57 L140.05 231.25 " stroke="#3a3a3a" stroke-width="1" opacity="0.55" fill="none"/><path d="M122.80 215.86 L123.60 223.61 M125.25 216.15 L126.05 224.00 M127.70 216.44 L128.50 224.39 M130.15 216.74 L130.95 224.78 M132.60 217.03 L133.40 225.18 M135.05 217.33 L135.85 225.57 M137.50 217.62 L138.30 225.96 M139.95 217.91 L140.75 226.35 " stroke="#fff" stroke-width="0.9" opacity="0.45" fill="none"/>
<path d="M140.8 220.8 L160 223.6 L160 234 L140.8 231.4Z" fill="url(#sh2)"/>
<path d="M159.6 220.4 Q160 219.1 161.4 219 L178 218.3 L181.4 225 L182 237 L176.2 246.2 L160 240.9 Q156.8 231 159.6 220.4Z" fill="url(#hd2)"/>
<ellipse cx="177.7" cy="232.2" rx="4.7" ry="13.9" transform="rotate(4 177.7 232.2)" fill="#e6e6e6"/><ellipse cx="178.1" cy="232.3" rx="3.8" ry="12.4" transform="rotate(4 178.1 232.3)" fill="url(#fc2)"/>
<path d="M178.6 228.8 L180.2 230.5 L180.2 235 L178.6 237.2 L177 235.5 L176.9 230.7Z" fill="#747474" stroke="#9a9a9a" stroke-width="0.4"/></svg>
<span class="t" style="left:180.7px;top:8px;letter-spacing:-0.216px;font-weight:700;">- Indust...</span>
<span class="fl" style="left:182px;top:28.8px"><svg width="13.5" height="7.6" viewBox="0 0 13.5 7.6" preserveAspectRatio="none"><rect x="0" y="0" width="13.5" height="2.6" fill="#1a1a1a"/><rect x="0" y="2.5" width="13.5" height="2.6" fill="#e31b1b"/><rect x="0" y="5" width="13.5" height="2.6" fill="#f7c81e"/><rect x="0.25" y="0.25" width="13.0" height="7.1" fill="none" stroke="#8a8a8a" stroke-opacity="0.55" stroke-width="0.5"/></svg></span><span class="fl" style="left:197.8px;top:28.8px"><svg width="13.5" height="7.6" viewBox="0 0 13.5 7.6" preserveAspectRatio="none"><rect x="0" y="0" width="13.5" height="7.6" fill="#1f3a9e"/><circle cx="6.75" cy="3.8" r="2.3" fill="none" stroke="#f2d64a" stroke-width="0.9" stroke-dasharray="0.9 0.55"/><rect x="0.25" y="0.25" width="13.0" height="7.1" fill="none" stroke="#8a8a8a" stroke-opacity="0.55" stroke-width="0.5"/></svg></span><span class="fl" style="left:213.5px;top:28.8px"><svg width="13.5" height="7.6" viewBox="0 0 13.5 7.6" preserveAspectRatio="none"><rect x="0" y="0" width="13.5" height="7.6" fill="#f4f0f0"/><rect x="0" y="0.0" width="13.5" height="1.0857142857142856" fill="#d4505c"/><rect x="0" y="2.1714285714285713" width="13.5" height="1.0857142857142856" fill="#d4505c"/><rect x="0" y="4.3428571428571425" width="13.5" height="1.0857142857142856" fill="#d4505c"/><rect x="0" y="6.514285714285713" width="13.5" height="1.0857142857142856" fill="#d4505c"/><rect x="0" y="0" width="6" height="4.2" fill="#5a5f9a"/><rect x="0.25" y="0.25" width="13.0" height="7.1" fill="none" stroke="#8a8a8a" stroke-opacity="0.55" stroke-width="0.5"/></svg></span><span class="fl" style="left:182px;top:41.2px"><svg width="13.5" height="7.6" viewBox="0 0 13.5 7.6" preserveAspectRatio="none"><rect x="0" y="0" width="13.5" height="7.6" fill="#2a3a94"/><path d="M0 0L13.5 7.6M13.5 0L0 7.6" stroke="#fff" stroke-width="1.8"/><path d="M0 0L13.5 7.6M13.5 0L0 7.6" stroke="#d62a36" stroke-width="0.7"/><path d="M6.75 0V7.6M0 3.8H13.5" stroke="#fff" stroke-width="2.8"/><path d="M6.75 0V7.6M0 3.8H13.5" stroke="#d62a36" stroke-width="1.5"/><rect x="0.25" y="0.25" width="13.0" height="7.1" fill="none" stroke="#8a8a8a" stroke-opacity="0.55" stroke-width="0.5"/></svg></span><span class="fl" style="left:197.8px;top:41.2px"><svg width="13.5" height="7.6" viewBox="0 0 13.5 7.6" preserveAspectRatio="none"><rect x="0" y="0" width="4.5" height="7.6" fill="#2545a8"/><rect x="4.5" y="0" width="4.5" height="7.6" fill="#fff"/><rect x="9" y="0" width="4.5" height="7.6" fill="#e2252b"/><rect x="0.25" y="0.25" width="13.0" height="7.1" fill="none" stroke="#8a8a8a" stroke-opacity="0.55" stroke-width="0.5"/></svg></span><span class="fl" style="left:213.5px;top:41.2px"><svg width="13.5" height="7.6" viewBox="0 0 13.5 7.6" preserveAspectRatio="none"><rect x="0" y="0" width="4.5" height="7.6" fill="#2f9a46"/><rect x="4.5" y="0" width="4.5" height="7.6" fill="#fff"/><rect x="9" y="0" width="4.5" height="7.6" fill="#dd2b32"/><rect x="0.25" y="0.25" width="13.0" height="7.1" fill="none" stroke="#8a8a8a" stroke-opacity="0.55" stroke-width="0.5"/></svg></span><span class="fl" style="left:182px;top:53.6px"><svg width="13.5" height="7.6" viewBox="0 0 13.5 7.6" preserveAspectRatio="none"><rect x="0" y="0" width="13.5" height="7.6" fill="#fff"/><circle cx="6.75" cy="3.8" r="2.2" fill="#c81428"/><rect x="0.25" y="0.25" width="13.0" height="7.1" fill="none" stroke="#8a8a8a" stroke-opacity="0.55" stroke-width="0.5"/></svg></span><span class="fl" style="left:197.8px;top:53.6px"><svg width="13.5" height="7.6" viewBox="0 0 13.5 7.6" preserveAspectRatio="none"><rect x="0" y="0" width="13.5" height="2.6" fill="#f39a32"/><rect x="0" y="2.5" width="13.5" height="2.6" fill="#fff"/><rect x="0" y="5" width="13.5" height="2.6" fill="#2f8f3a"/><circle cx="6.75" cy="3.8" r="1" fill="none" stroke="#2a3a94" stroke-width="0.6"/><rect x="0.25" y="0.25" width="13.0" height="7.1" fill="none" stroke="#8a8a8a" stroke-opacity="0.55" stroke-width="0.5"/></svg></span><span class="fl" style="left:213.5px;top:53.6px"><svg width="13.5" height="7.6" viewBox="0 0 13.5 7.6" preserveAspectRatio="none"><rect x="0" y="0" width="13.5" height="3.8" fill="#fff"/><rect x="0" y="3.8" width="13.5" height="3.8" fill="#d7222d"/><path d="M0 0L6.6 3.8L0 7.6Z" fill="#24408e"/><rect x="0.25" y="0.25" width="13.0" height="7.1" fill="none" stroke="#8a8a8a" stroke-opacity="0.55" stroke-width="0.5"/></svg></span><span class="fl" style="left:182px;top:66px"><svg width="13.5" height="7.6" viewBox="0 0 13.5 7.6" preserveAspectRatio="none"><rect x="0" y="0" width="13.5" height="7.6" fill="#fff"/><path d="M4.6 3.8A2.15 2.15 0 0 1 8.9 3.8Z" fill="#cd2e3a" transform="rotate(25 6.75 3.8)"/><path d="M4.6 3.8A2.15 2.15 0 0 0 8.9 3.8Z" fill="#0047a0" transform="rotate(25 6.75 3.8)"/><path d="M2 1.6L3.4 0.8M2 6L3.4 6.8M10.1 0.8L11.5 1.6M10.1 6.8L11.5 6" stroke="#222" stroke-width="0.8"/><rect x="0.25" y="0.25" width="13.0" height="7.1" fill="none" stroke="#8a8a8a" stroke-opacity="0.55" stroke-width="0.5"/></svg></span><span class="fl" style="left:197.8px;top:66px"><svg width="13.5" height="7.6" viewBox="0 0 13.5 7.6" preserveAspectRatio="none"><rect x="0" y="0" width="13.5" height="3.8" fill="#fff"/><rect x="0" y="3.8" width="13.5" height="3.8" fill="#dc143c"/><rect x="0.25" y="0.25" width="13.0" height="7.1" fill="none" stroke="#8a8a8a" stroke-opacity="0.55" stroke-width="0.5"/></svg></span><span class="fl" style="left:213.5px;top:66px"><svg width="13.5" height="7.6" viewBox="0 0 13.5 7.6" preserveAspectRatio="none"><rect x="0" y="0" width="13.5" height="7.6" fill="#de2910"/><polygon points="2.60,0.90 2.98,1.87 4.03,1.94 3.22,2.60 3.48,3.61 2.60,3.05 1.72,3.61 1.98,2.60 1.17,1.94 2.22,1.87" fill="#ffde00"/><rect x="0.25" y="0.25" width="13.0" height="7.1" fill="none" stroke="#8a8a8a" stroke-opacity="0.55" stroke-width="0.5"/></svg></span>
<svg class="i" style="left:216.2px;top:79px" width="16" height="16" viewBox="0 0 16 16" ><defs><radialGradient id="vg" cx="0.45" cy="0.35" r="0.75"><stop offset="0" stop-color="#fff3b0"/><stop offset="0.55" stop-color="#f6c638"/><stop offset="1" stop-color="#d98e0c"/></radialGradient></defs><circle cx="8" cy="8" r="7" fill="url(#vg)" stroke="#e0a21c" stroke-width="0.7"/><text x="8" y="10.6" text-anchor="middle" font-family="Liberation Sans, sans-serif" font-weight="700" font-size="7" fill="#2a1a00" textLength="10.5" lengthAdjust="spacingAndGlyphs">V11</text></svg>
<span class="t" style="left:240.5px;top:4px;letter-spacing:-0.109px;font-weight:700;">DIN 6929 LEE</span>
<div class="sepl" style="left:240px;top:22.0px;width:93px"></div>
<span class="t" style="left:240.5px;top:28px;">Screws with coarse</span>
<span class="t" style="left:240.5px;top:42px;">thread and reduced</span>
<span class="t" style="left:240.5px;top:57px;">shank for captive</span>
<svg class="i" style="left:241.0px;top:80.30000000000001px" width="14" height="6.2" viewBox="0 0 14 6.2" ><rect x="0.5" y="0.5" width="12.8" height="5.2" rx="0.9" fill="#1c1c1c" stroke="#111" stroke-width="0.9"/><path d="M2.4 1V3.4M4.2 1V2.6M6 1V3.4M7.8 1V2.6M9.6 1V3.4M11.4 1V2.6" stroke="#f4f4f4" stroke-width="0.9"/></svg>
<span class="t" style="left:256.5px;top:75px;letter-spacing:0.300px;">mm</span>
<a class="t lnk" style="right:99.4px;top:4px;letter-spacing:-0.28px">Bolts/Screws/Cap screws/Socket Head </a>
<span class="t" style="left:368.6px;top:17px;letter-spacing:-0.28px;"><span class="lnk" style="position:static">cap bolts</span>/<span class="lnk" style="position:static">DIN 6929 LEE</span></span>
<div class="sepl" style="left:368.6px;top:36.5px;width:198px"></div><div style="left:591.6px;top:48.5px;width:1.8px;height:4.5px;background:#2a2a2a"></div>
</div>
<div class="row" style="top:395px;height:103px">
<div class="cs" style="left:86.0px;height:101px"></div>
<div class="cs" style="left:174.5px;height:101px"></div>
<div class="cs" style="left:235.5px;height:101px"></div>
<div class="cs" style="left:363.5px;height:101px"></div>
<div class="cs" style="left:631.5px;height:101px"></div>
<div class="bar"></div>
<span class="t" style="left:25.8px;top:3px;">4</span>
<svg class="i" style="left:25.200000000000003px;top:34.60000000000002px" width="15" height="15" viewBox="0 0 15 15" ><path d="M7.2 0.9 L13.6 3.9 L13.6 10 L7.2 13.6 L0.9 10 L0.9 3.9 Z" fill="#fff"/><path d="M0.9 3.9 L7.2 7 L7.2 13.6 L0.9 10 Z" fill="#fff"/><path d="M13.6 3.9 L7.2 7 L7.2 13.6 L13.6 10 Z" fill="#fff"/><path d="M7.2 0.9 L13.6 3.9 L13.6 10 L7.2 13.6 L0.9 10 L0.9 3.9 Z M0.9 3.9 L7.2 7 L13.6 3.9 M7.2 7 V13.6" fill="none" stroke="#000" stroke-width="1.3" stroke-linejoin="round"/></svg>
<svg class="i" style="left:25.799999999999997px;top:50.60000000000002px" width="14" height="14" viewBox="0 0 14 14" ><defs><radialGradient id="sb" cx="0.4" cy="0.3" r="0.8"><stop offset="0" stop-color="#4d9ad6"/><stop offset="0.6" stop-color="#1d62a6"/><stop offset="1" stop-color="#0d3c74"/></radialGradient></defs><circle cx="7" cy="7" r="6.1" fill="url(#sb)"/><text x="7" y="10.7" text-anchor="middle" font-family="Liberation Sans, sans-serif" font-weight="700" font-size="10.4" fill="#fff">S</text></svg>
<svg class="i" style="left:25.5px;top:66.5px" width="14" height="8" viewBox="0 0 14 8" ><rect x="0" y="1.5" width="8" height="7" rx="1" fill="#f2c21c" stroke="#7a5a00" stroke-width="0.8"/><path d="M5 0.5H11.5L13.5 3V9H5Z" fill="#2f9a3c" stroke="#14501c" stroke-width="0.8"/><rect x="2" y="4" width="4" height="5" fill="#d8301c"/></svg>
<svg class="i" style="filter:blur(0.35px);left:93.5px;top:16px" width="72" height="60" viewBox="114.5 202 72 60" ><defs>
<linearGradient id="th2" gradientUnits="userSpaceOnUse" x1="131" y1="216" x2="129" y2="230"><stop offset="0" stop-color="#8a8a8a"/><stop offset="0.18" stop-color="#dcdcdc"/><stop offset="0.45" stop-color="#a0a0a0"/><stop offset="0.8" stop-color="#626262"/><stop offset="1" stop-color="#4c4c4c"/></linearGradient>
<linearGradient id="sh2" gradientUnits="userSpaceOnUse" x1="152" y1="221" x2="150.5" y2="233"><stop offset="0" stop-color="#8c8c8c"/><stop offset="0.2" stop-color="#f2f2f2"/><stop offset="0.55" stop-color="#b8b8b8"/><stop offset="0.85" stop-color="#8a8a8a"/><stop offset="1" stop-color="#5c5c5c"/></linearGradient>
<linearGradient id="hd2" gradientUnits="userSpaceOnUse" x1="169" y1="218" x2="165.5" y2="244"><stop offset="0" stop-color="#9a9a9a"/><stop offset="0.13" stop-color="#f4f4f4"/><stop offset="0.4" stop-color="#c6c6c6"/><stop offset="0.75" stop-color="#989898"/><stop offset="1" stop-color="#626262"/></linearGradient>
<linearGradient id="fc2" gradientUnits="userSpaceOnUse" x1="174" y1="220" x2="181" y2="246"><stop offset="0" stop-color="#cccccc"/><stop offset="0.55" stop-color="#a8a8a8"/><stop offset="1" stop-color="#7a7a7a"/></linearGradient>
</defs>
<path d="M120.6 215 L141.3 217.7 L141.3 231.8 L120.6 227 Q118.6 226.4 118.7 221 Q118.8 215.4 120.6 215Z" fill="url(#th2)"/>
<path d="M121.60 215.51 L122.90 227.73 M124.05 215.81 L125.35 228.24 M126.50 216.10 L127.80 228.74 M128.95 216.39 L130.25 229.24 M131.40 216.69 L132.70 229.74 M133.85 216.98 L135.15 230.24 M136.30 217.28 L137.60 230.75 M138.75 217.57 L140.05 231.25 " stroke="#3a3a3a" stroke-width="1" opacity="0.55" fill="none"/><path d="M122.80 215.86 L123.60 223.61 M125.25 216.15 L126.05 224.00 M127.70 216.44 L128.50 224.39 M130.15 216.74 L130.95 224.78 M132.60 217.03 L133.40 225.18 M135.05 217.33 L135.85 225.57 M137.50 217.62 L138.30 225.96 M139.95 217.91 L140.75 226.35 " stroke="#fff" stroke-width="0.9" opacity="0.45" fill="none"/>
<path d="M140.8 220.8 L160 223.6 L160 234 L140.8 231.4Z" fill="url(#sh2)"/>
<path d="M159.6 220.4 Q160 219.1 161.4 219 L178 218.3 L181.4 225 L182 237 L176.2 246.2 L160 240.9 Q156.8 231 159.6 220.4Z" fill="url(#hd2)"/>
<ellipse cx="177.7" cy="232.2" rx="4.7" ry="13.9" transform="rotate(4 177.7 232.2)" fill="#e6e6e6"/><ellipse cx="178.1" cy="232.3" rx="3.8" ry="12.4" transform="rotate(4 178.1 232.3)" fill="url(#fc2)"/>
<path d="M178.6 228.8 L180.2 230.5 L180.2 235 L178.6 237.2 L177 235.5 L176.9 230.7Z" fill="#747474" stroke="#9a9a9a" stroke-width="0.4"/></svg>
<span class="t" style="left:180.7px;top:8px;letter-spacing:-0.216px;font-weight:700;">- Indust...</span>
<span class="fl" style="left:182px;top:28.8px"><svg width="13.5" height="7.6" viewBox="0 0 13.5 7.6" preserveAspectRatio="none"><rect x="0" y="0" width="13.5" height="2.6" fill="#1a1a1a"/><rect x="0" y="2.5" width="13.5" height="2.6" fill="#e31b1b"/><rect x="0" y="5" width="13.5" height="2.6" fill="#f7c81e"/><rect x="0.25" y="0.25" width="13.0" height="7.1" fill="none" stroke="#8a8a8a" stroke-opacity="0.55" stroke-width="0.5"/></svg></span><span class="fl" style="left:197.8px;top:28.8px"><svg width="13.5" height="7.6" viewBox="0 0 13.5 7.6" preserveAspectRatio="none"><rect x="0" y="0" width="13.5" height="7.6" fill="#1f3a9e"/><circle cx="6.75" cy="3.8" r="2.3" fill="none" stroke="#f2d64a" stroke-width="0.9" stroke-dasharray="0.9 0.55"/><rect x="0.25" y="0.25" width="13.0" height="7.1" fill="none" stroke="#8a8a8a" stroke-opacity="0.55" stroke-width="0.5"/></svg></span><span class="fl" style="left:213.5px;top:28.8px"><svg width="13.5" height="7.6" viewBox="0 0 13.5 7.6" preserveAspectRatio="none"><rect x="0" y="0" width="13.5" height="7.6" fill="#f4f0f0"/><rect x="0" y="0.0" width="13.5" height="1.0857142857142856" fill="#d4505c"/><rect x="0" y="2.1714285714285713" width="13.5" height="1.0857142857142856" fill="#d4505c"/><rect x="0" y="4.3428571428571425" width="13.5" height="1.0857142857142856" fill="#d4505c"/><rect x="0" y="6.514285714285713" width="13.5" height="1.0857142857142856" fill="#d4505c"/><rect x="0" y="0" width="6" height="4.2" fill="#5a5f9a"/><rect x="0.25" y="0.25" width="13.0" height="7.1" fill="none" stroke="#8a8a8a" stroke-opacity="0.55" stroke-width="0.5"/></svg></span><span class="fl" style="left:182px;top:41.2px"><svg width="13.5" height="7.6" viewBox="0 0 13.5 7.6" preserveAspectRatio="none"><rect x="0" y="0" width="13.5" height="7.6" fill="#2a3a94"/><path d="M0 0L13.5 7.6M13.5 0L0 7.6" stroke="#fff" stroke-width="1.8"/><path d="M0 0L13.5 7.6M13.5 0L0 7.6" stroke="#d62a36" stroke-width="0.7"/><path d="M6.75 0V7.6M0 3.8H13.5" stroke="#fff" stroke-width="2.8"/><path d="M6.75 0V7.6M0 3.8H13.5" stroke="#d62a36" stroke-width="1.5"/><rect x="0.25" y="0.25" width="13.0" height="7.1" fill="none" stroke="#8a8a8a" stroke-opacity="0.55" stroke-width="0.5"/></svg></span><span class="fl" style="left:197.8px;top:41.2px"><svg width="13.5" height="7.6" viewBox="0 0 13.5 7.6" preserveAspectRatio="none"><rect x="0" y="0" width="4.5" height="7.6" fill="#2545a8"/><rect x="4.5" y="0" width="4.5" height="7.6" fill="#fff"/><rect x="9" y="0" width="4.5" height="7.6" fill="#e2252b"/><rect x="0.25" y="0.25" width="13.0" height="7.1" fill="none" stroke="#8a8a8a" stroke-opacity="0.55" stroke-width="0.5"/></svg></span><span class="fl" style="left:213.5px;top:41.2px"><svg width="13.5" height="7.6" viewBox="0 0 13.5 7.6" preserveAspectRatio="none"><rect x="0" y="0" width="4.5" height="7.6" fill="#2f9a46"/><rect x="4.5" y="0" width="4.5" height="7.6" fill="#fff"/><rect x="9" y="0" width="4.5" height="7.6" fill="#dd2b32"/><rect x="0.25" y="0.25" width="13.0" height="7.1" fill="none" stroke="#8a8a8a" stroke-opacity="0.55" stroke-width="0.5"/></svg></span><span class="fl" style="left:182px;top:53.6px"><svg width="13.5" height="7.6" viewBox="0 0 13.5 7.6" preserveAspectRatio="none"><rect x="0" y="0" width="13.5" height="7.6" fill="#fff"/><circle cx="6.75" cy="3.8" r="2.2" fill="#c81428"/><rect x="0.25" y="0.25" width="13.0" height="7.1" fill="none" stroke="#8a8a8a" stroke-opacity="0.55" stroke-width="0.5"/></svg></span><span class="fl" style="left:197.8px;top:53.6px"><svg width="13.5" height="7.6" viewBox="0 0 13.5 7.6" preserveAspectRatio="none"><rect x="0" y="0" width="13.5" height="2.6" fill="#f39a32"/><rect x="0" y="2.5" width="13.5" height="2.6" fill="#fff"/><rect x="0" y="5" width="13.5" height="2.6" fill="#2f8f3a"/><circle cx="6.75" cy="3.8" r="1" fill="none" stroke="#2a3a94" stroke-width="0.6"/><rect x="0.25" y="0.25" width="13.0" height="7.1" fill="none" stroke="#8a8a8a" stroke-opacity="0.55" stroke-width="0.5"/></svg></span><span class="fl" style="left:213.5px;top:53.6px"><svg width="13.5" height="7.6" viewBox="0 0 13.5 7.6" preserveAspectRatio="none"><rect x="0" y="0" width="13.5" height="3.8" fill="#fff"/><rect x="0" y="3.8" width="13.5" height="3.8" fill="#d7222d"/><path d="M0 0L6.6 3.8L0 7.6Z" fill="#24408e"/><rect x="0.25" y="0.25" width="13.0" height="7.1" fill="none" stroke="#8a8a8a" stroke-opacity="0.55" stroke-width="0.5"/></svg></span><span class="fl" style="left:182px;top:66px"><svg width="13.5" height="7.6" viewBox="0 0 13.5 7.6" preserveAspectRatio="none"><rect x="0" y="0" width="13.5" height="7.6" fill="#fff"/><path d="M4.6 3.8A2.15 2.15 0 0 1 8.9 3.8Z" fill="#cd2e3a" transform="rotate(25 6.75 3.8)"/><path d="M4.6 3.8A2.15 2.15 0 0 0 8.9 3.8Z" fill="#0047a0" transform="rotate(25 6.75 3.8)"/><path d="M2 1.6L3.4 0.8M2 6L3.4 6.8M10.1 0.8L11.5 1.6M10.1 6.8L11.5 6" stroke="#222" stroke-width="0.8"/><rect x="0.25" y="0.25" width="13.0" height="7.1" fill="none" stroke="#8a8a8a" stroke-opacity="0.55" stroke-width="0.5"/></svg></span><span class="fl" style="left:197.8px;top:66px"><svg width="13.5" height="7.6" viewBox="0 0 13.5 7.6" preserveAspectRatio="none"><rect x="0" y="0" width="13.5" height="3.8" fill="#fff"/><rect x="0" y="3.8" width="13.5" height="3.8" fill="#dc143c"/><rect x="0.25" y="0.25" width="13.0" height="7.1" fill="none" stroke="#8a8a8a" stroke-opacity="0.55" stroke-width="0.5"/></svg></span><span class="fl" style="left:213.5px;top:66px"><svg width="13.5" height="7.6" viewBox="0 0 13.5 7.6" preserveAspectRatio="none"><rect x="0" y="0" width="13.5" height="7.6" fill="#de2910"/><polygon points="2.60,0.90 2.98,1.87 4.03,1.94 3.22,2.60 3.48,3.61 2.60,3.05 1.72,3.61 1.98,2.60 1.17,1.94 2.22,1.87" fill="#ffde00"/><rect x="0.25" y="0.25" width="13.0" height="7.1" fill="none" stroke="#8a8a8a" stroke-opacity="0.55" stroke-width="0.5"/></svg></span>
<span class="t" style="left:240.5px;top:4px;letter-spacing:-0.206px;font-weight:700;">DIN 7964 KEE</span>
<div class="sepl" style="left:240px;top:22.0px;width:93px"></div>
<span class="t" style="left:240.7px;top:28px;letter-spacing:-0.127px;">Bolts and screws with</span>
<span class="t" style="left:240.7px;top:42px;letter-spacing:-0.197px;">coarse thread and</span>
<span class="t" style="left:240.7px;top:57px;letter-spacing:-0.220px;">reduced shank, form KEE</span>
<a class="t lnk" style="right:99.4px;top:4px;letter-spacing:-0.28px">Bolts/Screws/Cap screws/Socket Head </a>
<span class="t" style="left:368.6px;top:18px;letter-spacing:-0.292px;"><span class="lnk" style="position:static">cap bolts</span>/<span class="lnk" style="position:static">DIN 7964 KEE</span></span>
<div class="sepl" style="left:368.6px;top:36.5px;width:198px"></div>
<span class="t" style="left:368.6px;top:42px;letter-spacing:-0.052px;color:#5f5f5f;">No summary is available for projects. Expand the</span>
<span class="t" style="left:368.6px;top:56px;letter-spacing:-0.093px;color:#5f5f5f;">project to see lines</span>
</div>
<svg class="i" style="left:3.5999999999999996px;top:123.5px" width="14" height="14" viewBox="0 0 14 14" ><defs><linearGradient id="pg" x1="0" y1="0" x2="0" y2="1"><stop offset="0" stop-color="#86a7c8"/><stop offset="1" stop-color="#41689a"/></linearGradient></defs><circle cx="7" cy="7" r="5.2" fill="url(#pg)" stroke="#a9c0d8" stroke-width="0.9"/><path d="M7 4.4V9.6M4.4 7H9.6" stroke="#fff" stroke-width="1.7"/></svg>
<svg class="i" style="left:3.5999999999999996px;top:228.5px" width="14" height="14" viewBox="0 0 14 14" ><defs><linearGradient id="pg" x1="0" y1="0" x2="0" y2="1"><stop offset="0" stop-color="#86a7c8"/><stop offset="1" stop-color="#41689a"/></linearGradient></defs><circle cx="7" cy="7" r="5.2" fill="url(#pg)" stroke="#a9c0d8" stroke-width="0.9"/><path d="M7 4.4V9.6M4.4 7H9.6" stroke="#fff" stroke-width="1.7"/></svg>
<svg class="i" style="left:3.5999999999999996px;top:333.5px" width="14" height="14" viewBox="0 0 14 14" ><defs><linearGradient id="pg" x1="0" y1="0" x2="0" y2="1"><stop offset="0" stop-color="#86a7c8"/><stop offset="1" stop-color="#41689a"/></linearGradient></defs><circle cx="7" cy="7" r="5.2" fill="url(#pg)" stroke="#a9c0d8" stroke-width="0.9"/><path d="M7 4.4V9.6M4.4 7H9.6" stroke="#fff" stroke-width="1.7"/></svg>
<svg class="i" style="left:3.5999999999999996px;top:439.3px" width="14" height="14" viewBox="0 0 14 14" ><defs><linearGradient id="pg" x1="0" y1="0" x2="0" y2="1"><stop offset="0" stop-color="#86a7c8"/><stop offset="1" stop-color="#41689a"/></linearGradient></defs><circle cx="7" cy="7" r="5.2" fill="url(#pg)" stroke="#a9c0d8" stroke-width="0.9"/><path d="M7 4.4V9.6M4.4 7H9.6" stroke="#fff" stroke-width="1.7"/></svg>
<div class="vscroll"><div class="thumb"></div><div class="grip"></div><svg class="i" style="left:4px;top:4.6px" width="8" height="6" viewBox="0 0 8 6" ><path d="M0.8 5L4 1.6L7.2 5" fill="none" stroke="#1a1a1a" stroke-width="1.7"/></svg></div>
<div class="menu">
<span class="t" style="left:22.4px;top:2px;letter-spacing:-0.411px;font-weight:700;">Open</span>
<span class="t" style="left:22.4px;top:22px;letter-spacing:-0.335px;">Versions</span>
<div class="arr" style="left:270px;top:25px"></div>
<span class="t" style="left:22.4px;top:41px;letter-spacing:-0.303px;">Go to class</span>
<div class="arr" style="left:270px;top:44px"></div>
<div class="msep" style="top:60px"></div>
<span class="t" style="left:22.4px;top:68px;letter-spacing:0.022px;">Part information...</span>
<div class="msep" style="top:88px"></div>
<span class="t" style="left:22.4px;top:95px;letter-spacing:-0.070px;">Part comparison</span>
<div class="arr" style="left:270px;top:98px"></div>
<span class="t" style="left:22.4px;top:116px;letter-spacing:-0.081px;">Geometrical search for this part</span>
<svg class="i" style="left:1px;top:116.4px" width="16" height="16" viewBox="0 0 16 16" ><defs><linearGradient id="gr" x1="0" y1="0" x2="1" y2="1"><stop offset="0" stop-color="#ee4a52"/><stop offset="1" stop-color="#b80c18"/></linearGradient></defs><path d="M8 2.2L13.6 4.3L14 9.2L9 13.6L3 11.6L2 6.2Z" fill="url(#gr)" stroke="#b01420" stroke-width="0.7" stroke-linejoin="round"/><path d="M8 2.6L13 4.5L8.8 7L3 6Z" fill="#f2727a"/><path d="M6.4 4.3L8.2 3.6L10.2 4.4L8.4 5.4Z" fill="#fde4e6"/><path d="M8.8 7L9 13.2" stroke="#d83640" stroke-width="0.6"/></svg>
<div class="nt" style="top:113px"><span class="t" style="left:3.5px;top:1px;letter-spacing:-0.144px;">.. in new Tab</span></div>
<span class="t" style="left:22.4px;top:136px;letter-spacing:-0.101px;">Partial search for this part</span>
<svg class="i" style="left:1px;top:135px" width="16" height="16" viewBox="0 0 16 16" ><path d="M8.6 7V12.2A3.2 1.5 0 0 0 15 12.2V7Z" fill="#b9bdc2" stroke="#888e94" stroke-width="0.5"/><ellipse cx="11.8" cy="7" rx="3.2" ry="1.6" fill="#eceef0" stroke="#8e949a" stroke-width="0.5"/><path d="M1 7.2V12A3.8 1.8 0 0 0 8.6 12V7.2Z" fill="#e0661c" stroke="#a8480c" stroke-width="0.5"/><ellipse cx="4.8" cy="7.2" rx="3.8" ry="1.9" fill="#f6b88a" stroke="#c05a14" stroke-width="0.5"/><ellipse cx="4.8" cy="7.2" rx="1.8" ry="0.8" fill="#fff" opacity="0.8"/></svg>
<div class="nt" style="top:133px"><span class="t" style="left:3.5px;top:1px;letter-spacing:-0.144px;">.. in new Tab</span></div>
<span class="t" style="left:22.4px;top:156px;letter-spacing:-0.125px;">Sketch search for this part</span>
<svg class="i" style="left:1px;top:155.8px" width="16" height="16" viewBox="0 0 16 16" ><rect x="2.5" y="2.8" width="8.6" height="11" fill="#fafaf6" stroke="#3c3c3c" stroke-width="1"/><path d="M5 7.4h1.8M6 6.2v4.6M5 10.8h2.2" stroke="#222" stroke-width="0.9" fill="none"/><path d="M8 10.4L12.8 3.2L14.8 4.6L10 11.6L7.6 12.8Z" fill="#e01c1c" stroke="#8a0c0c" stroke-width="0.4"/><path d="M8 10.4L10 11.6L7.6 12.8Z" fill="#f4d23c"/><path d="M7.6 12.8l.5-.9.6.5z" fill="#222"/></svg>
<div class="nt" style="top:153px"><span class="t" style="left:3.5px;top:1px;letter-spacing:-0.144px;">.. in new Tab</span></div>
<span class="t" style="left:22.4px;top:175px;letter-spacing:-0.102px;">Cloud Navigation Search</span>
<svg class="i" style="left:1px;top:175px" width="16" height="16" viewBox="0 0 16 16" ><path d="M8.2 8.4L3.2 2.6M8.2 8.4L13.6 7.6M8.2 8.4L4.4 12.2M8.2 8.4L10.6 13M8.2 8.4L9.4 3.6" stroke="#f0923a" stroke-width="0.9"/><circle cx="8.2" cy="8.4" r="1.7" fill="#2a1cd8"/><circle cx="3.2" cy="2.6" r="1.35" fill="#f07a1c"/><circle cx="13.6" cy="7.6" r="1.35" fill="#f07a1c"/><circle cx="4.4" cy="12.2" r="1.35" fill="#f07a1c"/><circle cx="10.6" cy="13" r="1.35" fill="#f07a1c"/><circle cx="9.4" cy="3.6" r="1.2" fill="#f07a1c"/></svg>
<div class="msep" style="top:195px"></div>
<span class="t" style="left:22.4px;top:202px;letter-spacing:-0.077px;">Add to favorites ...</span>
<svg class="i" style="left:1px;top:202px" width="16" height="16" viewBox="0 0 16 16" ><defs><linearGradient id="sg2" x1="0" y1="0" x2="0" y2="1"><stop offset="0" stop-color="#ffe15a"/><stop offset="1" stop-color="#f29a10"/></linearGradient></defs><polygon points="7.90,1.40 10.02,5.89 14.94,6.51 11.32,9.91 12.25,14.79 7.90,12.40 3.55,14.79 4.48,9.91 0.86,6.51 5.78,5.89" fill="url(#sg2)" stroke="#e8980e" stroke-width="0.8" stroke-linejoin="round"/></svg>
<span class="t" style="left:22.4px;top:222px;letter-spacing:-0.179px;">Copy</span>
<svg class="i" style="left:1px;top:221.60000000000002px" width="16" height="16" viewBox="0 0 16 16" ><path d="M1.6 1.8H5.6L7.6 3.8V8.6H1.6Z" fill="#eef4fb" stroke="#3a66ae" stroke-width="0.9"/><path d="M2.8 4.2H5.2M2.8 5.8H6.2M2.8 7.2H6.2" stroke="#5d86c6" stroke-width="0.7"/><path d="M6.6 4.6H11.4L13.8 7V12.2H6.6Z" fill="#3a6fca" stroke="#1f4a9a" stroke-width="0.9"/><path d="M11.2 4.8V7.2H13.6" fill="#cfe0f6" stroke="#1f4a9a" stroke-width="0.5"/><path d="M7.8 8.2H12.4M7.8 9.6H12.4M7.8 11H12.4" stroke="#e8f0fb" stroke-width="0.8"/></svg>
<span class="t" style="left:22.4px;top:241px;letter-spacing:-0.000px;">Copy Project to clipboard</span>
<svg class="i" style="left:1px;top:241px" width="16" height="16" viewBox="0 0 16 16" ><path d="M1.6 1.8H5.6L7.6 3.8V8.6H1.6Z" fill="#eef4fb" stroke="#3a66ae" stroke-width="0.9"/><path d="M2.8 4.2H5.2M2.8 5.8H6.2M2.8 7.2H6.2" stroke="#5d86c6" stroke-width="0.7"/><path d="M6.6 4.6H11.4L13.8 7V12.2H6.6Z" fill="#3a6fca" stroke="#1f4a9a" stroke-width="0.9"/><path d="M11.2 4.8V7.2H13.6" fill="#cfe0f6" stroke="#1f4a9a" stroke-width="0.5"/><path d="M7.8 8.2H12.4M7.8 9.6H12.4M7.8 11H12.4" stroke="#e8f0fb" stroke-width="0.8"/></svg>
<span class="t" style="left:22.4px;top:260px;letter-spacing:-0.264px;">Analysis</span>
<div class="arr" style="left:270px;top:263px"></div>
<div class="msep" style="top:280px"></div>
<span class="t" style="left:22.4px;top:287px;letter-spacing:-0.095px;">Generate image data/preview images</span>
<span class="t" style="left:22.4px;top:306px;letter-spacing:-0.136px;">Edit with PARTproject</span>
<span class="t" style="left:22.4px;top:326px;letter-spacing:-0.136px;">Classification Wizard</span>
<svg class="i" style="left:1px;top:325px" width="16" height="16" viewBox="0 0 16 16" ><rect x="0.8" y="1" width="14.3" height="14.1" fill="#e61212"/><g fill="#fff" stroke="#fff" stroke-width="0.8"><rect x="7" y="3" width="2.6" height="2" rx="0.6"/><path d="M8.3 5V6.6M4.6 6.6H11.8" fill="none"/><rect x="3.2" y="6.6" width="3" height="2.2" rx="0.7"/><rect x="10.2" y="6.6" width="3" height="2.2" rx="0.7"/><path d="M4.7 8.8V10M2.8 10.4H6.6M11.7 8.8V11" fill="none"/><rect x="2.2" y="11.4" width="1.4" height="1.8" rx="0.4"/><rect x="5.6" y="11.4" width="1.4" height="1.8" rx="0.4"/><rect x="11" y="11.4" width="1.4" height="1.8" rx="0.4"/></g></svg>
</div>
</div></body></html>
